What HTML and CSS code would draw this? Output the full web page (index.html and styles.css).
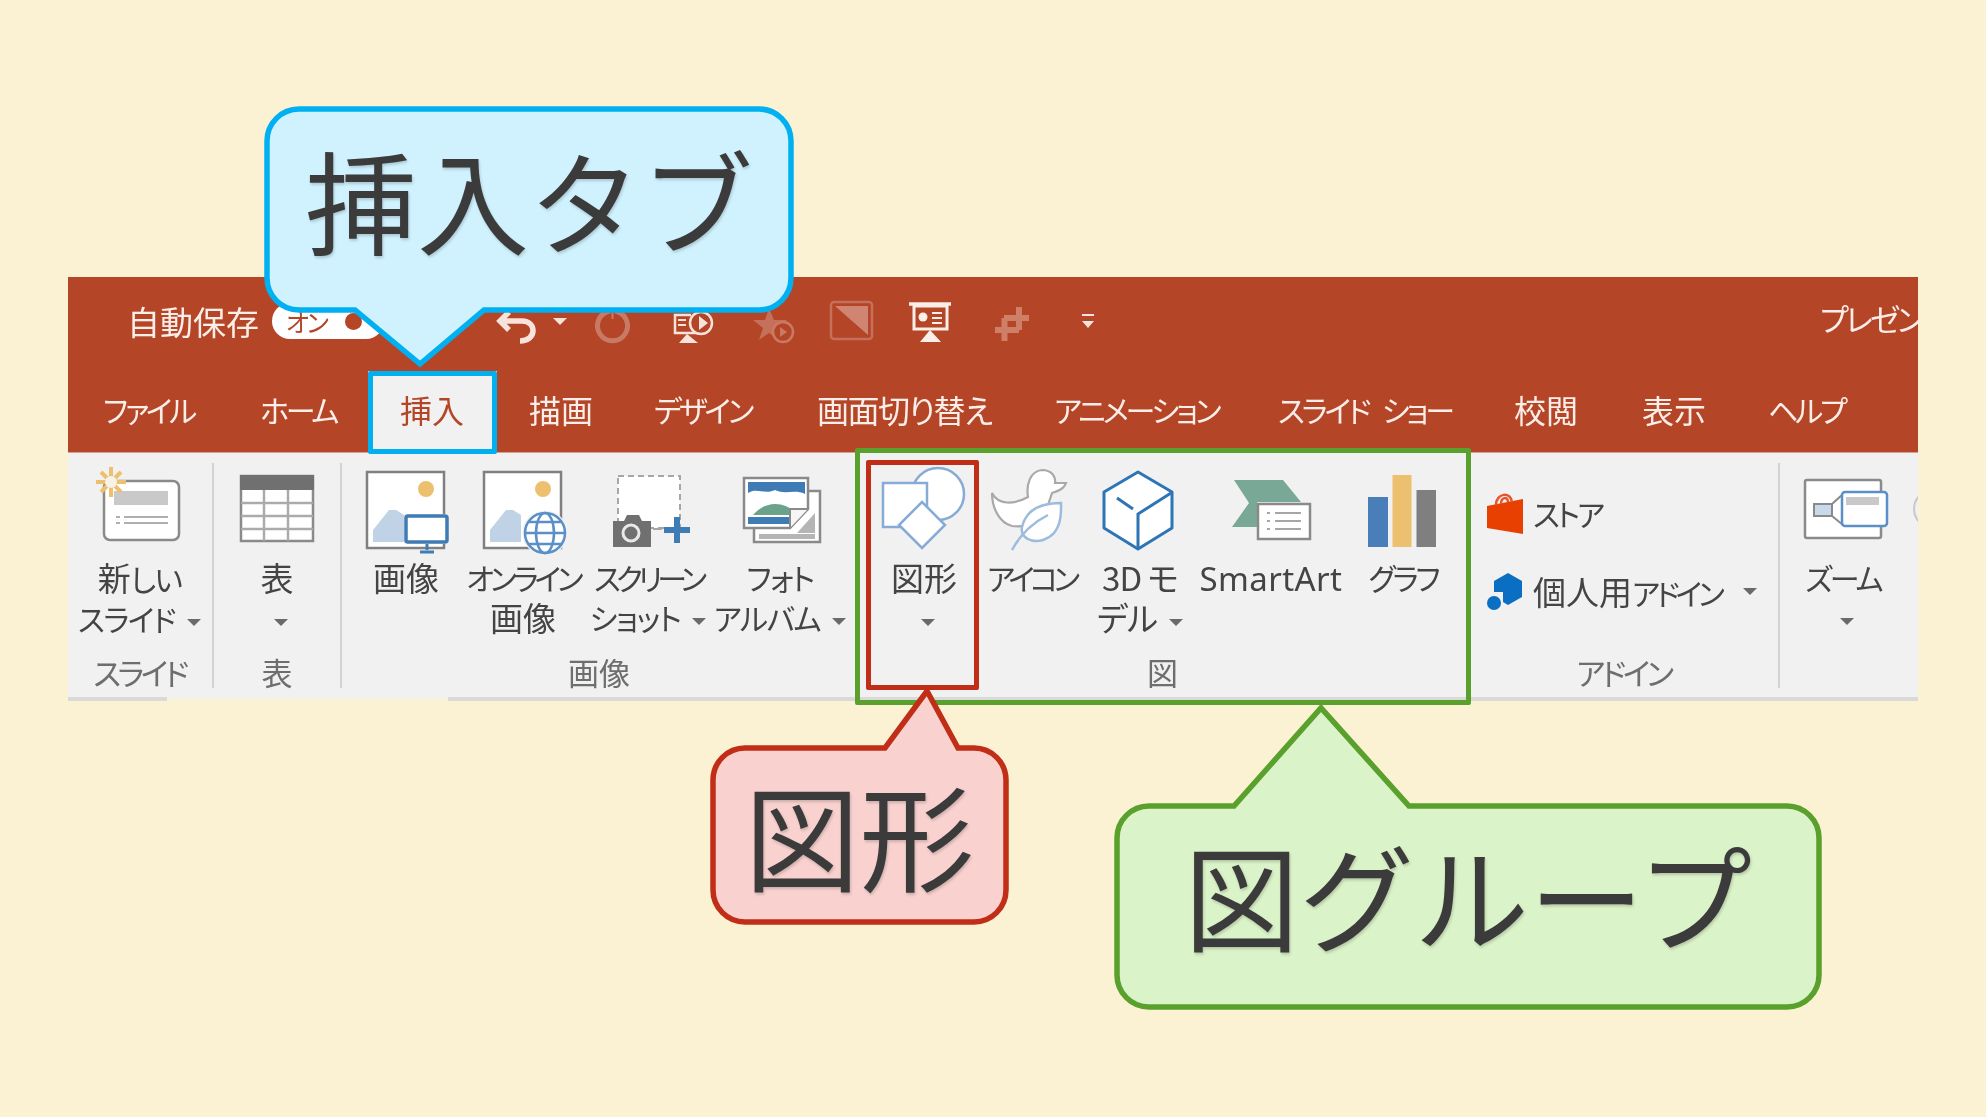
FILE: index.html
```html
<!DOCTYPE html>
<html lang="ja">
<head>
<meta charset="utf-8">
<title>挿入タブ 図形</title>
<link rel="stylesheet" href="styles.css">
</head>
<body>
<main class="page">
  <section class="app">
    <header class="titlebar">
      <span class="autosave">自動保存</span>
      <span class="pill"><span class="pill-text">オン</span><span class="pill-dot"></span></span>
      <div class="qat">
        <svg class="qi" viewBox="0 0 45 45"><path d="M6 22H27C42 22 42 42 25 42M14 13L5 22L14 31" fill="none" stroke="#F8E3DC" stroke-width="5.5"/></svg>
        <span class="qcaret"></span>
        <svg class="qi" viewBox="0 0 45 45"><path d="M25 12A15 15 0 1 1 20 12" fill="none" stroke="#C97A65" stroke-width="5"/><path d="M22.500 11V20" stroke="#C97A65" stroke-width="2"/></svg>
        <svg class="qi" viewBox="0 0 45 45"><path d="M20 16H4V34H28" fill="none" stroke="#F8E3DC" stroke-width="2.5"/><path d="M16 35L8 44H27Z" fill="#F8E3DC"/><path d="M7 21H15M7 26H15" stroke="#F8E3DC" stroke-width="2"/><circle cx="30" cy="24" r="11" fill="#B44527" stroke="#F8E3DC" stroke-width="2.5"/><path d="M28 17L37 24L28 31Z" fill="#F8E3DC"/></svg>
        <svg class="qi" viewBox="0 0 45 45"><path d="M18 9L23 21H36L26 29L29 42L18 34L8 41L12 29L2 21H14Z" fill="#C4705A"/><circle cx="32" cy="33" r="10" fill="#B44527" stroke="#C97A65" stroke-width="2.5"/><path d="M29 28L36 33L29 38Z" fill="#C97A65"/></svg>
        <svg class="qi" viewBox="0 0 45 45"><rect x="2" y="3" width="41" height="37" rx="3" fill="none" stroke="#C4705A" stroke-width="2.5"/><path d="M6 7H39V36Z" fill="#CF8571"/></svg>
        <svg class="qi" viewBox="0 0 45 45"><path d="M1 5H43" stroke="#FBEDE8" stroke-width="3.5"/><rect x="6" y="7" width="33" height="23" fill="none" stroke="#FBEDE8" stroke-width="3"/><circle cx="15" cy="18" r="4.500" fill="#FBEDE8"/><path d="M24 14H34M24 19H34M24 24H34" stroke="#FBEDE8" stroke-width="2"/><path d="M22 31L12 43H33Z" fill="#FBEDE8"/></svg>
        <svg class="qi" viewBox="0 0 45 45"><path d="M14.500 19V42M29 8V31M14 19H39M5 31H29" fill="none" stroke="#CF7E68" stroke-width="6"/></svg>
        <span class="qmore"></span>
      </div>
      <span class="doc-title">プレゼンテーション1</span>
    </header>

    <nav class="tabs">
      <span class="tab k">ファイル</span>
      <span class="tab k">ホーム</span>
      <span class="tab active">挿入</span>
      <span class="tab">描画</span>
      <span class="tab k">デザイン</span>
      <span class="tab m">画面切り替え</span>
      <span class="tab k">アニメーション</span>
      <span class="tab k">スライド ショー</span>
      <span class="tab">校閲</span>
      <span class="tab">表示</span>
      <span class="tab k">ヘルプ</span>
      <svg class="bulb" viewBox="0 0 30 40"><path d="M22 30C20 22 10 24 10 14C10 8 15 4 21 4" fill="none" stroke="#F8E3DC" stroke-width="3"/></svg>
    </nav>

    <div class="ribbon">
      <section class="group g-slide">
        <div class="items">
          <div class="item">
            <svg class="icon" viewBox="0 0 90 90">
              <rect x="9" y="16" width="75" height="59" rx="6" fill="#fff" stroke="#8A8A8A" stroke-width="2.5"/>
              <rect x="19" y="26" width="54" height="14" fill="#C9C9C9"/>
              <path d="M21 52H25M21 58H25M29 52H73M29 58H73" stroke="#AFAFAF" stroke-width="2"/>
              <path d="M16 2V32M1 17H31M6 7L26 27M6 27L26 7" stroke="#EDC070" stroke-width="4"/>
              <circle cx="16" cy="17" r="6" fill="#F7F2E8"/>
            </svg>
            <div class="lbl k"><span class="kj">新</span>しい<br>スライド<span class="caret"></span></div>
          </div>
        </div>
        <div class="glabel k">スライド</div>
      </section>

      <section class="group g-table">
        <div class="items">
          <div class="item">
            <svg class="icon" viewBox="0 0 90 90">
              <rect x="9" y="11" width="72" height="65" fill="#fff" stroke="#8A8A8A" stroke-width="2.5"/>
              <rect x="8" y="10" width="74" height="15" fill="#707070"/>
              <path d="M32 25V76M56 25V76M9 38H81M9 51H81M9 64H81" stroke="#ABABAB" stroke-width="2.5"/>
            </svg>
            <div class="lbl">表<br><span class="caret solo"></span></div>
          </div>
        </div>
        <div class="glabel">表</div>
      </section>

      <section class="group g-pics">
        <div class="items">
          <div class="item">
            <svg class="icon" viewBox="0 0 90 90">
              <rect x="6" y="7" width="77" height="76" fill="#fff" stroke="#808080" stroke-width="2.5"/>
              <circle cx="65" cy="24" r="8" fill="#EDC070"/>
              <path d="M12 77V65L28 45H35L43 50V77Z" fill="#BFD2E6"/>
              <rect x="43" y="49" width="45" height="30" fill="#F1F1F1"/>
              <rect x="45" y="51" width="41" height="26" rx="2" fill="#fff" stroke="#3F7CB5" stroke-width="3.500"/>
              <path d="M66 79V85M59 87H73" stroke="#3F7CB5" stroke-width="3"/>
            </svg>
            <div class="lbl">画像</div>
          </div>
          <div class="item">
            <svg class="icon" viewBox="0 0 90 90">
              <rect x="6" y="7" width="77" height="76" fill="#fff" stroke="#808080" stroke-width="2.5"/>
              <circle cx="65" cy="24" r="8" fill="#EDC070"/>
              <path d="M12 77V65L28 45H35L43 50V77Z" fill="#BFD2E6"/>
              <circle cx="67" cy="68" r="21" fill="#fff" stroke="#F1F1F1" stroke-width="3"/>
              <g fill="none" stroke="#5B8FC7" stroke-width="2.5">
                <circle cx="67" cy="68" r="20"/><ellipse cx="67" cy="68" rx="9" ry="20"/>
                <path d="M47 68H87M51 57H83M51 79H83"/>
              </g>
            </svg>
            <div class="lbl k k-snug">オンライン<br><span class="kj">画像</span></div>
          </div>
          <div class="item">
            <svg class="icon" viewBox="0 0 90 90">
              <rect x="15" y="11" width="62" height="52" fill="#fff" stroke="#A6A6A6" stroke-width="2" stroke-dasharray="6 4"/>
              <path d="M21 56L24 50H36L39 56H48V82H10V56Z" fill="#707070"/>
              <circle cx="28" cy="68" r="8" fill="#707070" stroke="#E8E8E8" stroke-width="3"/>
              <rect x="50" y="63" width="9" height="2" fill="#A6A6A6"/>
              <path d="M74 52V78M61 65H87" stroke="#3F7CB5" stroke-width="6"/>
            </svg>
            <div class="lbl k k-tight">スクリーン<br><span class="k-loose">ショット</span><span class="caret"></span></div>
          </div>
          <div class="item">
            <svg class="icon" viewBox="0 0 90 90">
              <rect x="19" y="26" width="66" height="51" fill="#fff" stroke="#8A8A8A" stroke-width="2.5"/>
              <rect x="24" y="69" width="56" height="5" fill="#B5B5B5"/>
              <path d="M62 68L80 48V68Z" fill="#B5B5B5"/>
              <path d="M9 13H73V44L55 63H9Z" fill="#fff" stroke="#8A8A8A" stroke-width="2.5"/>
              <rect x="13" y="17" width="57" height="15" fill="#3F7CB5"/>
              <path d="M13 28C22 22 30 30 40 25C50 30 60 24 70 29V34H13Z" fill="#fff"/>
              <path d="M18 50C30 36 48 36 60 47L56 50Z" fill="#6BA28C"/>
              <rect x="13" y="52" width="42" height="7" fill="#3F7CB5"/>
              <path d="M73 44H55V63" fill="#F5F5F5" stroke="#8A8A8A" stroke-width="2"/>
            </svg>
            <div class="lbl k">フォト<br>アルバム<span class="caret"></span></div>
          </div>
        </div>
        <div class="glabel">画像</div>
      </section>

      <section class="group g-fig">
        <div class="items">
          <div class="item">
            <svg class="icon" viewBox="0 0 90 90">
              <g fill="#fff" stroke="#86ABD6" stroke-width="2.5">
                <circle cx="59" cy="29" r="26"/>
                <rect x="4" y="18" width="44" height="44"/>
                <path d="M43 37L66 60L43 83L20 60Z"/>
              </g>
            </svg>
            <div class="lbl">図形<br><span class="caret solo"></span></div>
          </div>
          <div class="item">
            <svg class="icon" viewBox="0 0 90 90">
              <path d="M6 28C12 40 28 40 42 32C40 20 44 6 56 5C66 5 70 12 69 18L80 18C78 24 72 26 66 28L62 40C56 52 44 64 26 61C14 58 6 44 6 28Z" fill="#fff" stroke="#A9A9A9" stroke-width="2.2"/>
              <path d="M75 38C55 38 40 45 36 62C33 76 55 82 68 68C76 58 75 45 75 38Z" fill="#fff" stroke="#9CBBDD" stroke-width="2.5"/>
              <path d="M26 85C34 70 46 58 62 50" fill="none" stroke="#9CBBDD" stroke-width="2.5"/>
            </svg>
            <div class="lbl k k-tight">アイコン</div>
          </div>
          <div class="item">
            <svg class="icon" viewBox="0 0 90 90">
              <path d="M43 7L77 27V63L43 84L9 63V27Z" fill="#fff" stroke="#2E75B6" stroke-width="3" stroke-linejoin="round"/>
              <path d="M22 33L38 44M43 84V49L76 28" fill="none" stroke="#2E75B6" stroke-width="3"/>
            </svg>
            <div class="lbl wide3d">3D モ<br>デル<span class="caret"></span></div>
          </div>
          <div class="item">
            <svg class="icon" viewBox="0 0 90 90">
              <path d="M8 15H57L75 37H31V62H6L23 38Z" fill="#7AA896"/>
              <rect x="32" y="39" width="52" height="35" fill="#fff" stroke="#8A8A8A" stroke-width="2.5"/>
              <path d="M41 48H44M41 56H44M41 64H44M49 48H75M49 56H75M49 64H75" stroke="#A6A6A6" stroke-width="2"/>
            </svg>
            <div class="lbl latin">SmartArt</div>
          </div>
          <div class="item">
            <svg class="icon" viewBox="0 0 90 90">
              <rect x="10" y="32" width="20" height="50" fill="#4A7EB8"/>
              <rect x="34.500" y="10" width="19" height="72" fill="#EDC070"/>
              <rect x="58.500" y="25" width="19.500" height="57" fill="#7F7F7F"/>
            </svg>
            <div class="lbl k k-mid">グラフ</div>
          </div>
        </div>
        <div class="glabel">図</div>
      </section>

      <section class="group g-addin">
        <div class="items rows">
          <div class="row">
            <svg class="ri" viewBox="0 0 36 43"><path d="M0 15L36 8V43L0 37Z" fill="#E84000"/><path d="M9 14C9 2 24 0 25 11M14 13C14 6 21 5 21 11" fill="none" stroke="#E8552A" stroke-width="2.500"/></svg>
            <span class="rtext k k-mid">ストア</span>
          </div>
          <div class="row">
            <svg class="ri" viewBox="0 0 36 43"><path d="M21 3L35 11V27L21 35L16 32V22H7V11Z" fill="#0A6FC2"/><circle cx="7" cy="33" r="7" fill="#0A6FC2"/></svg>
            <span class="rtext k k-snug"><span class="kj">個人用</span>アドイン</span><span class="caret wide"></span>
          </div>
        </div>
        <div class="glabel k">アドイン</div>
      </section>

      <section class="group g-zoom">
        <div class="items">
          <div class="item">
            <svg class="icon" viewBox="0 0 90 90">
              <rect x="7" y="15" width="76" height="58" rx="2" fill="#fff" stroke="#8A8A8A" stroke-width="2.5"/>
              <rect x="16" y="39" width="18" height="12" fill="#C8D9EC" stroke="#8A8A8A" stroke-width="2"/>
              <path d="M34 39L45 29M34 51L45 60" stroke="#8A8A8A" stroke-width="2"/>
              <rect x="44" y="27" width="45" height="34" rx="3" fill="#fff" stroke="#5B8FC7" stroke-width="2.5"/>
              <rect x="48" y="32" width="33" height="8" fill="#C9C9C9"/>
            </svg>
            <div class="lbl k k-mid">ズーム<br><span class="caret solo"></span></div>
          </div>
          <svg class="peek" viewBox="0 0 6 44"><circle cx="20" cy="22" r="19" fill="none" stroke="#C9C9C9" stroke-width="2"/></svg>
        </div>
      </section>
    </div>
    <div class="ribbon-edge"></div>
  </section>
</main>

<div class="mark mark-tab"></div>
<div class="mark mark-group"></div>
<div class="mark mark-shape"></div>

<aside class="callout c-tab">
  <svg class="bubble" viewBox="0 0 530 262"><path d="M35 3H495A32 32 0 0 1 527 35V172A32 32 0 0 1 495 204H220L156 258L91 204H35A32 32 0 0 1 3 172V35A32 32 0 0 1 35 3Z"/></svg>
  <span class="ctext">挿入タブ</span>
</aside>
<aside class="callout c-shape">
  <svg class="bubble" viewBox="0 0 299 239"><path d="M35 62H175L217 5L248 62H264A32 32 0 0 1 296 94V204A32 32 0 0 1 264 236H35A32 32 0 0 1 3 204V94A32 32 0 0 1 35 62Z"/></svg>
  <span class="ctext">図形</span>
</aside>
<aside class="callout c-group">
  <svg class="bubble" viewBox="0 0 708 307"><path d="M35 103H120L207 5L295 103H673A32 32 0 0 1 705 135V272A32 32 0 0 1 673 304H35A32 32 0 0 1 3 272V135A32 32 0 0 1 35 103Z"/></svg>
  <span class="ctext">図グループ</span>
</aside>
</body>
</html>
```

FILE: styles.css
```css
* { box-sizing: border-box; }

html, body {
  margin: 0;
  height: 100%;
}

body {
  position: relative;
  min-height: 1117px;
  overflow: hidden;
  background: #FBF1D3;
  color: #444;
  font-family: "Noto Sans CJK JP", "Noto Sans", sans-serif;
  font-feature-settings: "palt";
}

.page {
  padding: 277px 68px 0;
}

.app {
  width: 1850px;
  overflow: hidden;
  filter: blur(0.45px);
}

/* title bar */
.titlebar {
  display: flex;
  align-items: center;
  height: 88px;
  padding-left: 59px;
  background: #B44527;
  color: #FBEDE8;
  overflow: hidden;
}

.autosave {
  width: 130px;
  font-size: 33px;
  line-height: 40px;
  white-space: nowrap;
  flex: none;
}

.pill {
  display: flex;
  align-items: center;
  flex: none;
  width: 112px;
  height: 36px;
  margin-left: 15px;
  padding-left: 14px;
  border-radius: 18px;
  background: #fff;
}

.pill-text {
  width: 52px;
  color: #B44527;
  font-size: 25px;
  line-height: 30px;
  letter-spacing: -2.5px;
}

.pill-dot {
  width: 17px;
  height: 17px;
  margin-left: 7px;
  border-radius: 50%;
  background: #B44527;
}

.qat {
  display: grid;
  grid-template-columns: 54px 32px 72px 90px 70px 86px 72px 92px 60px;
  justify-items: center;
  align-items: center;
  flex: none;
  margin-left: 106px;
}

.qi {
  width: 45px;
  height: 45px;
}

.qcaret {
  width: 0;
  height: 0;
  border-left: 7px solid transparent;
  border-right: 7px solid transparent;
  border-top: 7px solid #F8E3DC;
}

.qmore {
  position: relative;
  width: 12px;
  height: 14px;
  border-top: 2px solid #F8E3DC;
}

.qmore::after {
  content: "";
  position: absolute;
  left: 0;
  top: 5px;
  border-left: 6px solid transparent;
  border-right: 6px solid transparent;
  border-top: 7px solid #F8E3DC;
}

.doc-title {
  flex: none;
  margin: -8px 0 0 702px;
  font-size: 31px;
  letter-spacing: -3px;
  white-space: nowrap;
}

/* tabs */
.tabs {
  display: grid;
  grid-template-columns: 157px 140px 129px 125px 163px 237px 224px 236px 128px 126px 144px 40px;
  height: 88px;
  padding: 6px 0 0 35px;
  background: #B44527;
  color: #FBEDE8;
  border-bottom: 1px solid #D9A090;
}

.tab {
  display: flex;
  align-items: center;
  padding-bottom: 5px;
  font-size: 32px;
  white-space: pre;
}

.tab.k {
  font-size: 30px;
  letter-spacing: -3.2px;
  word-spacing: 10px;
}

.tab.m {
  letter-spacing: -1.5px;
}

.tab.active {
  margin: 0 32px 0 -32px;
  padding-left: 32px;
  background: #F1F1F1;
  color: #B44527;
}

.bulb {
  width: 30px;
  height: 40px;
  align-self: center;
}

/* ribbon */
.ribbon {
  display: flex;
  height: 244px;
  background: #F1F1F1;
}

.ribbon-edge {
  height: 4px;
  background: linear-gradient(90deg, #D9D9D9 0 99px, #F5F1E2 99px 380px, #D9D9D9 380px);
}

.group {
  position: relative;
  display: flex;
  flex-direction: column;
  flex: none;
}

.g-slide { width: 146px; }
.g-table { width: 128px; }
.g-pics  { width: 514px; padding-left: 6px; }
.g-fig   { width: 616px; padding-left: 15px; }
.g-addin { width: 308px; padding-left: 15px; }
.g-zoom  { width: 138px; }

.g-slide::after, .g-table::after, .g-addin::after {
  content: "";
  position: absolute;
  top: 10px;
  right: 0;
  width: 2px;
  height: 225px;
  background: #D2D2D2;
}

.items {
  display: grid;
  height: 199px;
  padding-top: 12px;
}

.g-slide .items { grid-template-columns: 143px; }
.g-table .items { grid-template-columns: 126px; }
.g-pics  .items { grid-template-columns: 116px 118px 132px 132px; }
.g-fig   .items { grid-template-columns: 106px 108px 110px 152px 112px; }
.g-zoom  .items { grid-template-columns: 126px 13px; }

.item {
  display: flex;
  flex-direction: column;
  align-items: center;
  min-width: 0;
}

.icon {
  flex: none;
  width: 90px;
  height: 90px;
  margin-bottom: 2px;
  overflow: visible;
}

.lbl {
  font-size: 33px;
  line-height: 40px;
  text-align: center;
  white-space: nowrap;
  color: #444;
}

.lbl.k, .rtext.k {
  font-size: 30px;
}

.k { letter-spacing: -1.5px; }
.k-mid { letter-spacing: -3px; }
.k-snug { letter-spacing: -4px; }
.k-tight { letter-spacing: -5px; }
.k-loose { letter-spacing: -1.5px; }
.kj { font-size: 33px; letter-spacing: 0; }
.wide3d { letter-spacing: -1px; }

.latin {
  padding-top: 2px;
  font-family: "Noto Sans", sans-serif;
  font-size: 33px;
  letter-spacing: 0.4px;
}

.caret {
  display: inline-block;
  width: 0;
  height: 0;
  margin-left: 12px;
  vertical-align: middle;
  border-left: 7px solid transparent;
  border-right: 7px solid transparent;
  border-top: 7px solid #6A6A6A;
}

.caret.solo {
  margin-left: 8px;
}

.caret.wide {
  margin-left: 22px;
}

.glabel {
  font-size: 31px;
  line-height: 40px;
  text-align: center;
  color: #6E6E6E;
  white-space: nowrap;
}

.glabel.k {
  letter-spacing: -3.5px;
}

.g-slide .glabel { width: 143px; }
.g-table .glabel { width: 126px; }
.g-pics .glabel  { margin-left: -6px; }
.g-fig .glabel   { margin-left: -18px; }
.g-addin .glabel { margin-left: -20px; }

.rows {
  display: block;
  padding-top: 20px;
}

.row {
  display: flex;
  align-items: center;
  height: 79px;
}

.ri {
  flex: none;
  width: 36px;
  height: 43px;
  margin-right: 10px;
}

.rtext {
  font-size: 33px;
  line-height: 40px;
  white-space: nowrap;
}

.peek {
  width: 6px;
  height: 44px;
  margin: 22px 0 0 7px;
}

/* overlays */
.mark {
  position: absolute;
  border-radius: 2px;
  border-style: solid;
  border-width: 5px;
}

.mark-tab {
  left: 368px;
  top: 371px;
  width: 129px;
  height: 83px;
  border-color: #00B0F0;
}

.mark-group {
  left: 855px;
  top: 448px;
  width: 616px;
  height: 257px;
  border-color: #5AA02C;
}

.mark-shape {
  left: 866px;
  top: 460px;
  width: 113px;
  height: 230px;
  border-color: #C12E17;
}

.callout {
  position: absolute;
  display: flex;
  justify-content: center;
  color: #3B3B3B;
  font-size: 115px;
  line-height: 130px;
  font-feature-settings: normal;
  white-space: nowrap;
  text-shadow: 1px 2px 3px rgba(0, 0, 0, 0.18);
}

.bubble {
  position: absolute;
  inset: 0;
  width: 100%;
  height: 100%;
  stroke-width: 5.5;
}

.ctext {
  position: relative;
}

.c-tab {
  left: 264px;
  top: 106px;
  width: 530px;
  height: 262px;
  padding-top: 27px;
  font-size: 112px;
}

.c-tab .bubble {
  fill: #D0F2FF;
  stroke: #00B0F0;
}

.c-shape {
  left: 710px;
  top: 686px;
  width: 299px;
  height: 239px;
  padding-top: 82px;
}

.c-shape .bubble {
  fill: #F9D2CF;
  stroke: #C12E17;
}

.c-group {
  left: 1114px;
  top: 703px;
  width: 708px;
  height: 307px;
  padding-top: 125px;
}

.c-group .bubble {
  fill: #DBF3C8;
  stroke: #5AA02C;
}
```
